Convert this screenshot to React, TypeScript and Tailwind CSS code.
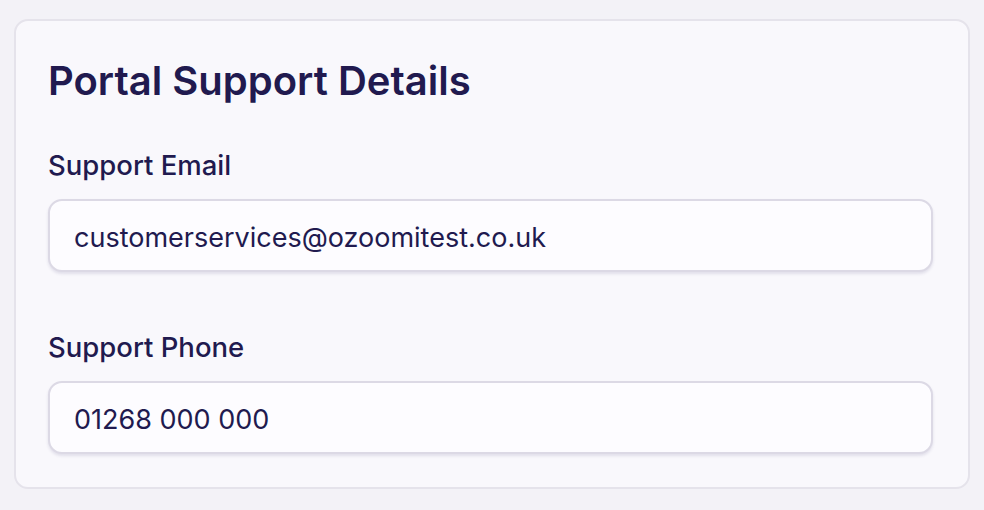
export default function App() {
  return (
    <div className="min-h-[510px] w-full bg-[#f3f2f7] px-[14px] pt-[19px] font-['Inter',sans-serif] text-[#211a4f]">
      <div className="h-[470px] rounded-[14px] border-2 border-[#e5e3eb] bg-[#f9f8fc] px-[32px] pt-[34px]">
        <h2 className="text-[40px] font-semibold leading-[52px]">Portal Support Details</h2>
        <div className="mt-[40px] flex flex-col gap-[57px]">
          <Field label="Support Email" value="customerservices@ozoomitest.co.uk" />
          <Field label="Support Phone" value="01268 000 000" />
        </div>
      </div>
    </div>
  );
}

function Field({ label, value }: { label: string; value: string }) {
  return (
    <div>
      <label className="block text-[27.5px] font-medium leading-[36px]">{label}</label>
      <input
        readOnly
        value={value}
        className="mt-[16px] h-[73px] w-[885px] rounded-[14px] border-2 border-[#dcd9e5] bg-[#fdfcff] px-[24px] pt-[3px] text-[27px] text-[#211a4f] shadow-[0_2px_3px_rgba(60,50,110,0.12)] outline-none"
      />
    </div>
  );
}
